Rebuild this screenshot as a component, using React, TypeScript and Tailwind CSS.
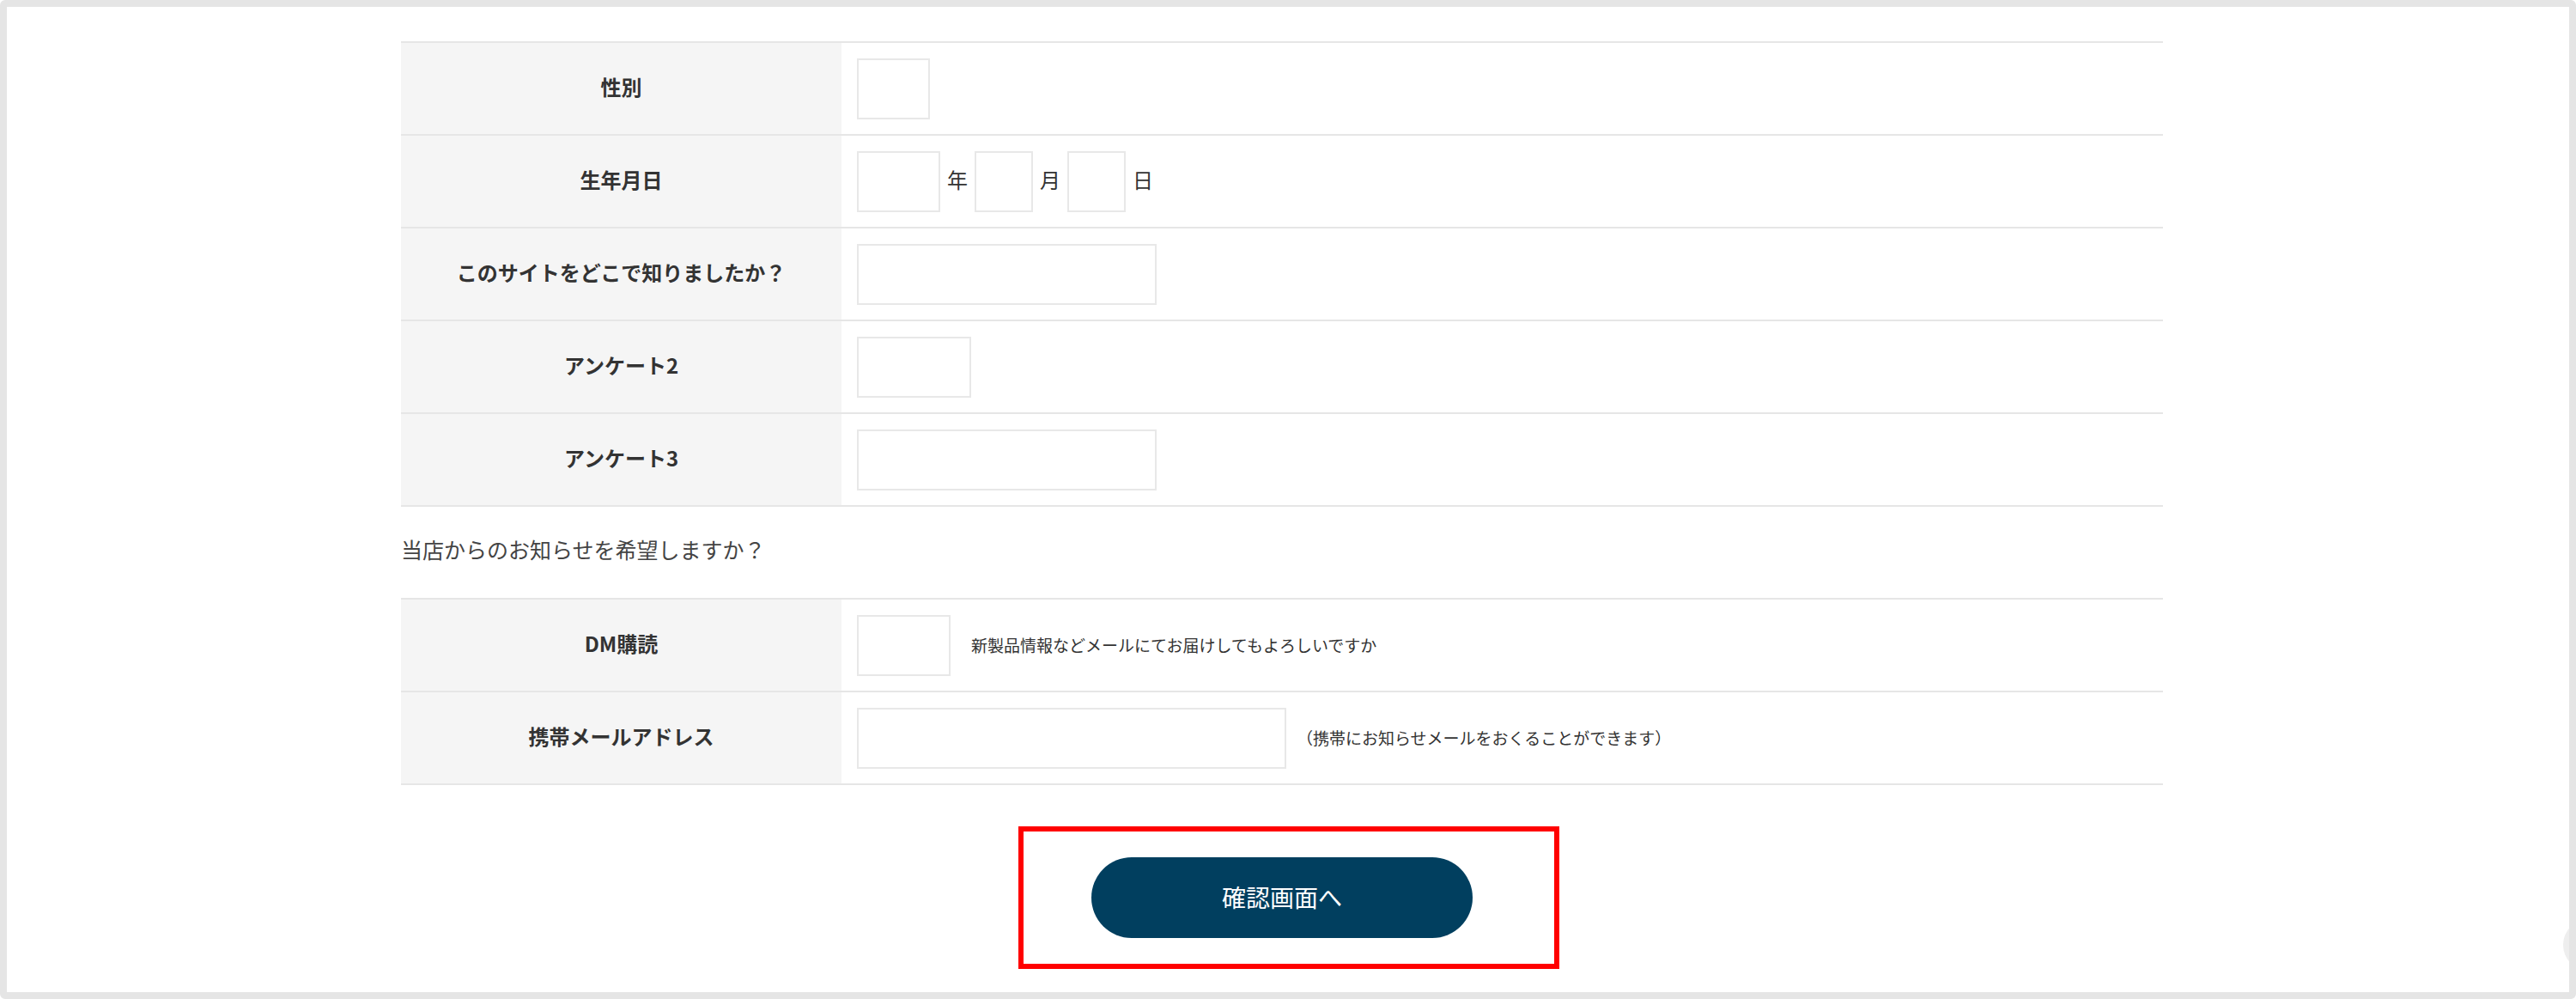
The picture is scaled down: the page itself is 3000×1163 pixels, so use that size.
import React from "react";

const font = { fontFamily: '"Noto Sans CJK JP", "Noto Sans", sans-serif' };

function Box({ w }: { w: string }) {
  return <div className={`h-[71px] border-2 border-[#e8e8e8] bg-white ${w}`} />;
}

function Row({ label, children }: { label: string; children: React.ReactNode }) {
  return (
    <div className="flex h-[108px] border-b-2 border-[#e6e6e6]">
      <div className="flex w-[513px] shrink-0 items-center justify-center bg-[#f5f5f5] pb-[4px] text-[24px] font-bold text-[#333333]">
        {label}
      </div>
      <div className="flex flex-1 items-center pl-[18px] text-[24px] text-[#333333]">{children}</div>
    </div>
  );
}

export default function App() {
  return (
    <div
      className="relative h-[1163px] w-[3000px] overflow-hidden rounded-[6px] border-[8px] border-[#e5e5e5] bg-white"
      style={font}
    >
      <div className="ml-[459px] w-[2052px] pt-[40px]">
        <div className="border-t-2 border-[#e6e6e6]">
          <Row label="性別">
            <Box w="w-[85px]" />
          </Row>
          <Row label="生年月日">
            <Box w="w-[97px]" />
            <span className="mx-[8px] pb-[4px] leading-none">年</span>
            <Box w="w-[68px]" />
            <span className="mx-[8px] pb-[4px] leading-none">月</span>
            <Box w="w-[68px]" />
            <span className="mx-[8px] pb-[4px] leading-none">日</span>
          </Row>
          <Row label="このサイトをどこで知りましたか？">
            <Box w="w-[349px]" />
          </Row>
          <Row label="アンケート2">
            <Box w="w-[133px]" />
          </Row>
          <Row label="アンケート3">
            <Box w="w-[349px]" />
          </Row>
        </div>
        <div className="flex h-[106px] items-center pb-[6px] text-[25px] text-[#444444]">
          当店からのお知らせを希望しますか？
        </div>
        <div className="border-t-2 border-[#e6e6e6]">
          <Row label="DM購読">
            <Box w="w-[109px]" />
            <span className="ml-[24px] text-[19px] text-[#333333]">新製品情報などメールにてお届けしてもよろしいですか</span>
          </Row>
          <Row label="携帯メールアドレス">
            <Box w="w-[500px]" />
            <span className="ml-[12px] text-[19px] text-[#333333]">（携帯にお知らせメールをおくることができます）</span>
          </Row>
        </div>
        <div className="mt-[84px] flex justify-center">
          <button className="flex h-[94px] w-[444px] items-center justify-center rounded-full bg-[#013f5f] pb-[2px] text-[28px] text-white">
            確認画面へ
          </button>
        </div>
      </div>
      <div className="absolute left-[1178px] top-[954px] h-[166px] w-[630px] border-[6px] border-[#ff0000]" />
      <div className="absolute left-[2977px] top-[1062px] h-[60px] w-[60px] rounded-full bg-[#eeeeee]" />
    </div>
  );
}
